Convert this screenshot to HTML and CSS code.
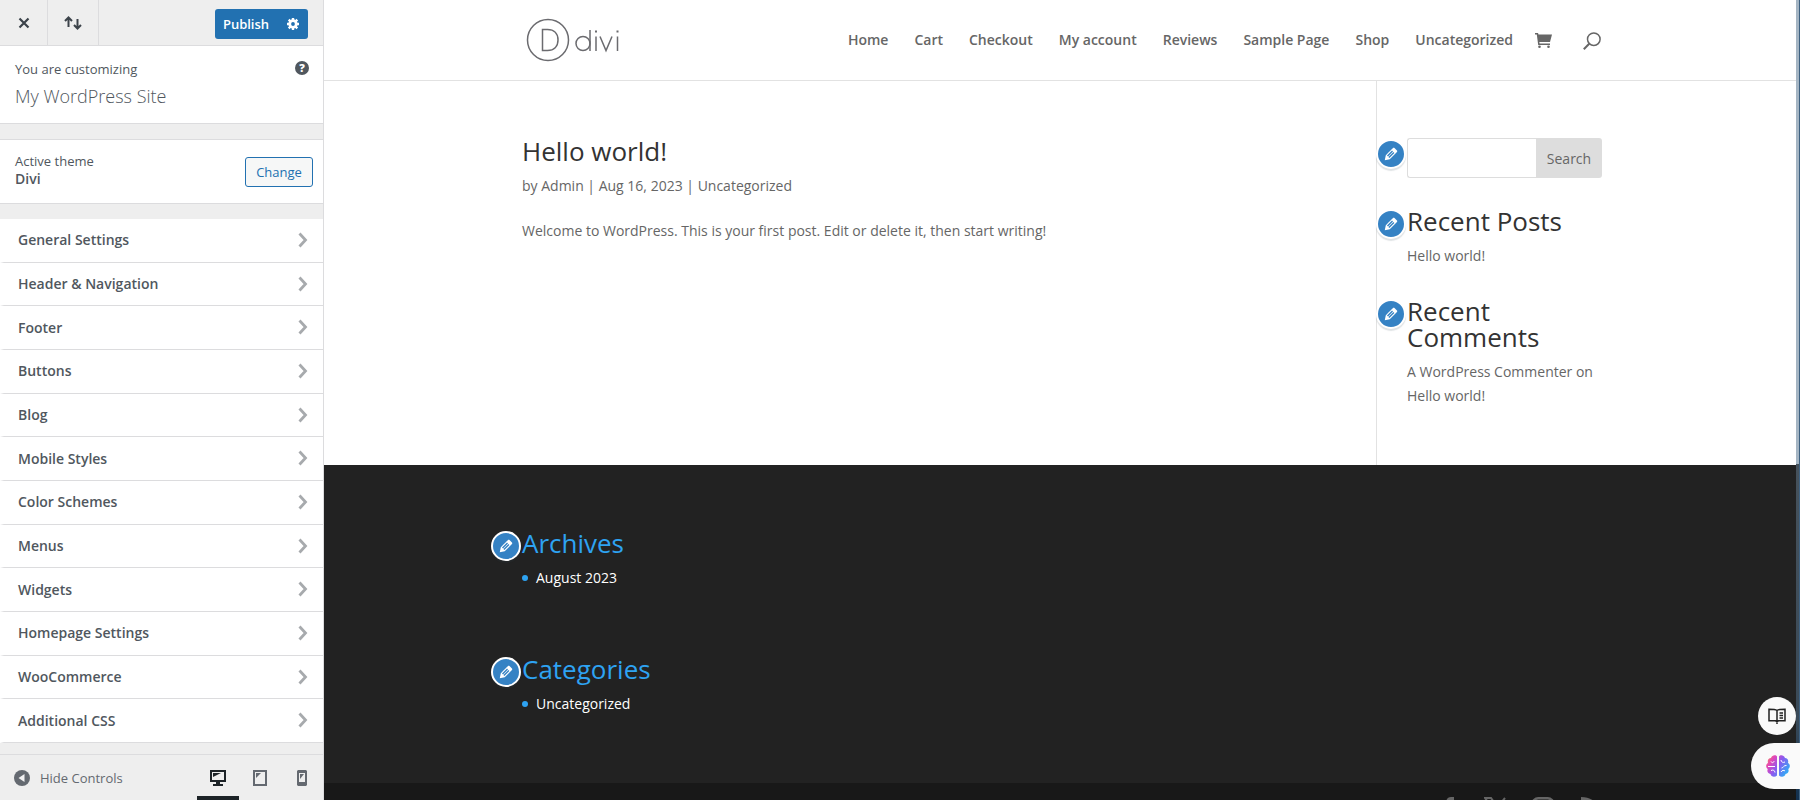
FILE: index.html
```html
<!DOCTYPE html>
<html lang="en">
<head>
    <meta charset="UTF-8">
    <title>Customize: My WordPress Site</title>
    <link rel="stylesheet" href="styles.css">
</head>
<body>
    <!-- shared icons -->
    <svg class="sprite" aria-hidden="true">
        <symbol id="chevron" viewBox="0 0 10 16"><path d="M1.5 1.5L7.500 8l-6 6.500" fill="none" stroke="currentColor" stroke-width="2.800"/></symbol>
        <symbol id="pencil" viewBox="0 0 20 20"><path d="M13.890 3.390l2.710 2.720c.46.460.42 1.240.03 1.640l-8.010 8.020-5.560 1.160 1.160-5.580s7.600-7.630 7.990-8.030c.39-.390 1.220-.390 1.680.07zm-2.730 2.790l-5.590 5.610 1.110 1.110 5.540-5.650zm-2.970 8.230l5.580-5.600-1.070-1.080-5.590 5.600z" fill="currentColor"/></symbol>
    </svg>

    <div class="customizer">
        <aside class="controls">
            <div class="controls-header">
                <button class="bar-btn close" aria-label="Close">
                    <svg width="12" height="12" viewBox="0 0 12 12"><path d="M1.500 1.500l9 9M10.500 1.500l-9 9" stroke="currentColor" stroke-width="2.200"/></svg>
                </button>
                <button class="bar-btn swap" aria-label="Move sidebar">
                    <svg width="18" height="14" viewBox="0 0 18 14"><path d="M4.500 11V1.800M1 5l3.500-3.500L8 5M13.500 3v9.200M10 9l3.500 3.500L17 9" fill="none" stroke="currentColor" stroke-width="2"/></svg>
                </button>
                <div class="publish-group">
                    <button class="publish">Publish</button>
                    <button class="publish-settings" aria-label="Publish settings">
                        <svg width="12" height="12" viewBox="0 0 14 14"><circle cx="7" cy="7" r="3.800" fill="none" stroke="currentColor" stroke-width="3.200"/><path d="M7 0v3M7 11v3M0 7h3M11 7h3M2 2l2.200 2.200M9.800 9.800L12 12M12 2L9.800 4.200M4.200 9.800L2 12" stroke="currentColor" stroke-width="2.800"/></svg>
                    </button>
                </div>
            </div>

            <div class="site-info">
                <div>
                    <span class="info-label">You are customizing</span>
                    <strong class="site-title">My WordPress Site</strong>
                </div>
                <button class="help" aria-label="Help">?</button>
            </div>

            <div class="theme-info">
                <div>
                    <span class="theme-label">Active theme</span>
                    <strong class="theme-name">Divi</strong>
                </div>
                <button class="change">Change</button>
            </div>

            <ul class="panels">
                <li><button>General Settings<svg><use href="#chevron"/></svg></button></li>
                <li><button>Header &amp; Navigation<svg><use href="#chevron"/></svg></button></li>
                <li><button>Footer<svg><use href="#chevron"/></svg></button></li>
                <li><button>Buttons<svg><use href="#chevron"/></svg></button></li>
                <li><button>Blog<svg><use href="#chevron"/></svg></button></li>
                <li><button>Mobile Styles<svg><use href="#chevron"/></svg></button></li>
                <li><button>Color Schemes<svg><use href="#chevron"/></svg></button></li>
                <li><button>Menus<svg><use href="#chevron"/></svg></button></li>
                <li><button>Widgets<svg><use href="#chevron"/></svg></button></li>
                <li><button>Homepage Settings<svg><use href="#chevron"/></svg></button></li>
                <li><button>WooCommerce<svg><use href="#chevron"/></svg></button></li>
                <li><button>Additional CSS<svg><use href="#chevron"/></svg></button></li>
            </ul>

            <div class="controls-footer">
                <button class="collapse">
                    <svg width="16" height="16" viewBox="0 0 16 16"><circle cx="8" cy="8" r="8" fill="currentColor"/><path d="M10.500 4v8L4.500 8z" fill="#f0f0f1"/></svg>
                    Hide Controls
                </button>
                <div class="devices">
                    <button class="active" aria-label="Desktop">
                        <svg width="16" height="16" viewBox="0 0 16 16"><path fill-rule="evenodd" d="M0 0h16v12h-6v2h3v2H3v-2h3v-2H0zM2 2v8h12V2z" fill="currentColor"/><path d="M3 3h8L3 7z" fill="currentColor"/></svg>
                    </button>
                    <button aria-label="Tablet">
                        <svg width="14" height="16" viewBox="0 0 14 16"><path fill-rule="evenodd" d="M0 0h14v16H0zM2 2v12h10V2z" fill="currentColor"/><path d="M3 3h5L3 8z" fill="currentColor"/></svg>
                    </button>
                    <button aria-label="Mobile">
                        <svg width="10" height="16" viewBox="0 0 10 16"><path fill-rule="evenodd" d="M1 0h8l1 1v14l-1 1H1l-1-1V1zM2 3v9h6V3z" fill="currentColor"/><path d="M3 4h4L3 9z" fill="currentColor"/></svg>
                    </button>
                </div>
            </div>
        </aside>

        <div class="preview">
            <header class="site-header">
                <div class="container header-inner">
                    <a href="#" class="logo" aria-label="divi">
                        <svg width="94" height="44" viewBox="0 0 94 44" fill="none" stroke="#6b6b6f" stroke-width="1.500">
                            <circle cx="22" cy="22" r="20.500"/>
                            <path d="M16.500 11.500h5c6.500 0 10.500 4 10.500 10.500s-4 10.500-10.500 10.500h-5z"/>
                            <circle cx="57" cy="25.500" r="7"/>
                            <path d="M64 12v21M70 18.500V33M74 18.500L80 32.500l6-14M91.500 18.500V33"/>
                            <path d="M70 12.500v2M91.500 12.500v2" stroke-width="2"/>
                        </svg>
                    </a>
                    <nav class="menu">
                        <a href="#">Home</a>
                        <a href="#">Cart</a>
                        <a href="#">Checkout</a>
                        <a href="#">My account</a>
                        <a href="#">Reviews</a>
                        <a href="#">Sample Page</a>
                        <a href="#">Shop</a>
                        <a href="#">Uncategorized</a>
                    </nav>
                    <a href="#" class="cart" aria-label="Cart">
                        <svg width="17" height="15" viewBox="0 0 17 15"><path d="M0 0h3l.5 1.500H17L15 9H4.300l.3 1.500H15V12H3.200L1.800 1.500H0z" fill="currentColor"/><circle cx="4.500" cy="13.700" r="1.300" fill="currentColor"/><circle cx="13.500" cy="13.700" r="1.300" fill="currentColor"/></svg>
                    </a>
                    <button class="search-toggle" aria-label="Search">
                        <svg width="18" height="18" viewBox="0 0 18 18" fill="none" stroke="currentColor"><circle cx="10.800" cy="7.200" r="6.300" stroke-width="1.500"/><path d="M6.200 11.800L.8 17.200" stroke-width="2"/></svg>
                    </button>
                </div>
            </header>

            <main class="container content">
                <article class="post">
                    <h2><a href="#">Hello world!</a></h2>
                    <p class="meta">by <a href="#">Admin</a> | Aug 16, 2023 | <a href="#">Uncategorized</a></p>
                    <p>Welcome to WordPress. This is your first post. Edit or delete it, then start writing!</p>
                </article>
                <aside class="sidebar">
                    <section class="widget">
                        <button class="edit" aria-label="Edit widget"><svg><use href="#pencil"/></svg></button>
                        <form class="search">
                            <input type="text" aria-label="Search for">
                            <button type="button">Search</button>
                        </form>
                    </section>
                    <section class="widget">
                        <button class="edit" aria-label="Edit widget"><svg><use href="#pencil"/></svg></button>
                        <h3>Recent Posts</h3>
                        <a href="#">Hello world!</a>
                    </section>
                    <section class="widget">
                        <button class="edit" aria-label="Edit widget"><svg><use href="#pencil"/></svg></button>
                        <h3>Recent Comments</h3>
                        <a href="#">A WordPress Commenter</a> on <a href="#">Hello world!</a>
                    </section>
                </aside>
            </main>

            <footer class="site-footer">
                <div class="container footer-widgets">
                    <section class="widget">
                        <button class="edit" aria-label="Edit widget"><svg><use href="#pencil"/></svg></button>
                        <h3>Archives</h3>
                        <ul><li><a href="#">August 2023</a></li></ul>
                    </section>
                    <section class="widget">
                        <button class="edit" aria-label="Edit widget"><svg><use href="#pencil"/></svg></button>
                        <h3>Categories</h3>
                        <ul><li><a href="#">Uncategorized</a></li></ul>
                    </section>
                </div>
                <div class="footer-bottom">
                    <div class="container social">
                        <a href="#" aria-label="Facebook"><svg width="24" height="24" viewBox="0 0 24 24"><path d="M9 24V13H6V9h3V6c0-4 2-6 5-6h3v4h-2c-1.500 0-2 .5-2 2v3h4l-.5 4H13v11z" fill="currentColor"/></svg></a>
                        <a href="#" aria-label="X"><svg width="24" height="24" viewBox="0 0 24 24"><path d="M1 1h6l16 22h-6zM21 1L3 23" fill="none" stroke="currentColor" stroke-width="2"/></svg></a>
                        <a href="#" aria-label="Instagram"><svg width="24" height="24" viewBox="0 0 24 24" fill="none" stroke="currentColor" stroke-width="2.500"><rect x="1.300" y="1.300" width="21.400" height="21.400" rx="6"/><circle cx="12" cy="12" r="5"/></svg></a>
                        <a href="#" aria-label="RSS"><svg width="24" height="24" viewBox="0 0 24 24" fill="none" stroke="currentColor" stroke-width="4"><path d="M3 2c11 0 18 7 18 18M3 10c6 0 10 4 10 10"/><circle cx="5" cy="19" r="1"/></svg></a>
                    </div>
                </div>
            </footer>
        </div>
    </div>

    <div class="screen-edge"></div>
    <div class="floating">
        <button class="reader" aria-label="Reader">
            <svg width="18" height="16" viewBox="0 0 18 16" fill="none" stroke="#222" stroke-width="1.500"><path d="M9 2.500C7.500 1.500 5 1.300 1 1.300v11.400h6.500L9 14l1.500-1.300H17V1.300c-4 0-6.500.2-8 1.200zM9 2.500V16M11.500 5h3.500M11.500 7.500h3.500M11.500 10h3.500"/></svg>
        </button>
        <button class="brain" aria-label="Assistant">
            <svg width="24" height="22" viewBox="0 0 24 22">
                <defs><linearGradient id="brain-fill" x1="0" y1="0" x2="1" y2="0.600"><stop offset="0" stop-color="#f59a3c"/><stop offset=".28" stop-color="#e445b8"/><stop offset=".58" stop-color="#8a5bf0"/><stop offset="1" stop-color="#35a8f5"/></linearGradient></defs>
                <path d="M11 1.500v19c-2 2-6 1.500-6.500-1.500C1.500 18.500.8 16 1.800 14-.5 12.500-.3 9 2 8c-.8-3 .5-5 3-5C6-.3 10-.5 11 1.500zM13 1.500v19c2 2 6 1.500 6.500-1.500 3-.5 3.700-3 2.700-5 2.300-1.500 2.100-5-.2-6 .8-3-.5-5-3-5C18-.3 14-.5 13 1.500z" fill="url(#brain-fill)"/>
                <path d="M5 6.500c1 2 3 1 3-.5M2 11.500h7M5 15.500c2-1 4 0 4 2M15 5c0 2 2 3 4 2M15.500 13c2 0 2-3 5-2.500M15 17c1-2 3-2 4-1" fill="none" stroke="#fff" stroke-width="1"/>
            </svg>
        </button>
    </div>
</body>
</html>
```
FILE: styles.css
```css
* {
    box-sizing: border-box;
}

body {
    margin: 0;
    font-family: "Open Sans", "Noto Sans", sans-serif;
    font-size: 14px;
    color: #666;
    background: #fff;
}

a {
    color: inherit;
    text-decoration: none;
}

button {
    font-family: inherit;
    padding: 0;
    border: none;
    background: none;
    cursor: pointer;
}

h2, h3, p, ul {
    margin: 0;
    padding: 0;
}

ul {
    list-style: none;
}

svg {
    display: block;
}

.sprite {
    position: absolute;
    width: 0;
    height: 0;
}

.customizer {
    display: flex;
    height: 100vh;
    overflow: hidden;
}

/* Customizer controls */
.controls {
    display: flex;
    flex-direction: column;
    flex: none;
    width: 324px;
    background: #eee;
    border-right: 1px solid #dcdcde;
    color: #50575e;
}

.controls-header {
    display: flex;
    align-items: center;
    height: 46px;
    padding-right: 15px;
    border-bottom: 1px solid #dcdcde;
}

.bar-btn {
    display: flex;
    align-items: center;
    justify-content: center;
    height: 100%;
    border-right: 1px solid #dcdcde;
    color: #3c434a;
}

.close {
    width: 48px;
}

.swap {
    width: 51px;
}

.publish-group {
    display: flex;
    margin-left: auto;
    height: 30px;
    margin-top: 2px;
    background: #2271b1;
    border-radius: 3px;
}

.publish-group button {
    color: #fff;
    font-size: 13px;
    font-weight: 600;
}

.publish {
    width: 62px;
}

.publish-settings {
    display: flex;
    align-items: center;
    justify-content: center;
    width: 31px;
}

.site-info {
    display: flex;
    justify-content: space-between;
    height: 78px;
    padding: 13px 14px 0 15px;
    background: #fff;
    border-bottom: 1px solid #dcdcde;
}

.info-label,
.site-title,
.theme-label,
.theme-name {
    display: block;
}

.info-label {
    font-size: 13px;
    line-height: 20px;
}

.site-title {
    font-size: 18px;
    font-weight: 300;
    line-height: 34px;
}

.help {
    width: 14px;
    height: 14px;
    margin-top: 2px;
    border-radius: 50%;
    background: #50575e;
    color: #fff;
    font-size: 11px;
    font-weight: 800;
    line-height: 14px;
}

.theme-info {
    display: flex;
    align-items: center;
    justify-content: space-between;
    height: 65px;
    margin: 15px 0;
    padding: 0 10px 0 15px;
    background: #fff;
    border-top: 1px solid #dcdcde;
    border-bottom: 1px solid #dcdcde;
}

.theme-label {
    font-size: 13px;
    line-height: 18px;
}

.theme-name {
    padding-bottom: 3px;
    font-size: 14px;
    font-weight: 600;
    line-height: 18px;
}

.change {
    width: 68px;
    height: 30px;
    border: 1px solid #2271b1;
    border-radius: 3px;
    background: #f6f7f7;
    color: #2271b1;
    font-size: 13px;
}

.panels {
    display: flex;
    flex-direction: column;
    flex: 1;
    margin-bottom: 11px;
}

.panels li {
    flex: 1;
}

.panels button {
    display: flex;
    align-items: center;
    justify-content: space-between;
    width: 100%;
    height: 100%;
    padding: 0 15px 1px 14px;
    background: #fff;
    border-bottom: 1px solid #dcdcde;
    border-left: 4px solid #fff;
    color: #50575e;
    font-size: 14px;
    font-weight: 600;
}

.panels svg {
    width: 10px;
    height: 16px;
    color: #a7aaad;
}

.controls-footer {
    display: flex;
    justify-content: space-between;
    height: 46px;
    padding-left: 14px;
    border-top: 1px solid #dcdcde;
}

.collapse {
    display: flex;
    align-items: center;
    gap: 10px;
    color: #646970;
    font-size: 13px;
}

.devices {
    display: flex;
    color: #646970;
}

.devices button {
    display: flex;
    align-items: center;
    justify-content: center;
    width: 42px;
    padding-top: 4px;
    border-bottom: 4px solid transparent;
    color: #646970;
}

.devices .active {
    color: #1d2327;
    border-bottom-color: #1d2327;
}

/* Site preview */
.preview {
    flex: 1;
    display: flex;
    flex-direction: column;
    min-width: 0;
}

.container {
    width: 80%;
    max-width: 1080px;
    margin: 0 auto;
}

.site-header {
    flex: none;
    border-bottom: 1px solid #e2e2e2;
}

.header-inner {
    display: flex;
    align-items: center;
    height: 80px;
}

.logo {
    margin-left: 4px;
}

.menu {
    display: flex;
    gap: 26px;
    margin-left: auto;
    padding-bottom: 2px;
    font-weight: 600;
}

.cart {
    margin-left: 22px;
}

.search-toggle {
    margin-left: 31px;
    padding: 2px 1px 0 0;
    color: #666;
}

.content {
    display: flex;
    flex: none;
    line-height: 24px;
}

.post {
    flex: 1;
    padding-top: 57px;
}

.post h2 {
    color: #333;
    font-size: 26px;
    font-weight: 400;
    line-height: 26px;
    padding-bottom: 10px;
}

.meta {
    margin-bottom: 21px;
}

.sidebar {
    width: 226px;
    padding: 57px 0 27px 30px;
    border-left: 1px solid #e2e2e2;
}

.widget {
    position: relative;
}

.sidebar .widget {
    margin-bottom: 30px;
}

.widget h3 {
    color: #333;
    font-size: 26px;
    font-weight: 400;
    line-height: 26px;
    padding-bottom: 10px;
}

/* edit shortcut sits over the left edge of each widget */
.edit {
    position: absolute;
    top: 1px;
    left: -31px;
    display: flex;
    align-items: center;
    justify-content: center;
    width: 30px;
    height: 30px;
    border: 2px solid #fff;
    border-radius: 50%;
    background: #3582c4;
    box-shadow: 0 2px 1px rgba(46, 68, 83, 0.15);
    color: #fff;
}

.edit svg {
    width: 18px;
    height: 18px;
}

.search {
    display: flex;
    height: 40px;
}

.search input {
    flex: 1;
    min-width: 0;
    border: 1px solid #ddd;
    border-right: none;
    border-radius: 3px 0 0 3px;
}

.search button {
    width: 66px;
    background: #ddd;
    border-radius: 0 3px 3px 0;
    color: #666;
    font-size: 14px;
}

.site-footer {
    display: flex;
    flex-direction: column;
    flex: none;
    background: #222;
}

.footer-widgets {
    padding: 65px 0 67px;
}

.footer-widgets .widget + .widget {
    margin-top: 66px;
}

.footer-widgets h3 {
    color: #2ea3f2;
}

.footer-widgets li {
    display: flex;
    align-items: center;
    gap: 8px;
    color: #fff;
    line-height: 24px;
}

.footer-widgets li::before {
    content: "";
    width: 6px;
    height: 6px;
    border-radius: 50%;
    background: #2ea3f2;
}

.footer-bottom {
    background: #181818;
    color: #666;
}

.social {
    display: flex;
    justify-content: flex-end;
    gap: 23px;
    padding: 14px 0;
}

/* Overlays along the right side of the window */
.screen-edge {
    position: fixed;
    top: 0;
    right: 0;
    bottom: 0;
    width: 4px;
    border-right: 1px solid #3f6180;
    background: linear-gradient(#a5b5c3 58%, #46525c 58%, #3a4a58 90%, #12304f);
}

.floating {
    position: fixed;
    right: 0;
    bottom: 11px;
    display: flex;
    flex-direction: column;
    align-items: flex-end;
    gap: 8px;
}

.floating button {
    display: flex;
    align-items: center;
    justify-content: center;
    background: #fafafa;
}

.reader {
    width: 38px;
    height: 38px;
    margin-right: 4px;
    border-radius: 50%;
}

.brain {
    width: 49px;
    height: 46px;
    padding-left: 4px;
    border-radius: 23px 0 0 23px;
}
```
